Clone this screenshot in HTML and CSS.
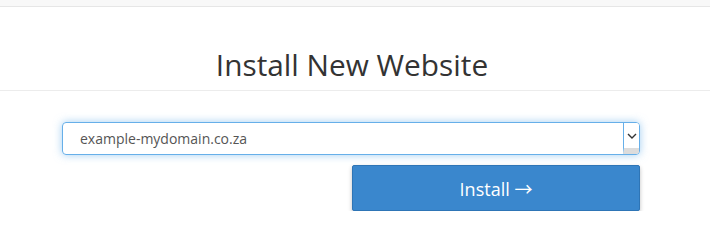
FILE: index.html
```html
<!DOCTYPE html>
<html>
<head>
<meta charset="utf-8">
<link rel="stylesheet" href="styles.css">
</head>
<body>
<div class="topbar"></div>
<div class="header">
  <h1 class="title">Install New Website</h1>
</div>
<div class="form">
  <div class="select">
    <span class="select-text">example-mydomain.co.za</span>
    <span class="select-arrow">
      <svg width="10" height="6" viewBox="0 0 10 6"><path d="M1 1 L5 5 L9 1" fill="none" stroke="#333" stroke-width="1.4"/></svg>
    </span>
  </div>
  <div class="actions">
    <button class="btn">Install <span class="arrow">→</span></button>
  </div>
</div>
</body>
</html>
```
FILE: styles.css
```css
html, body { margin: 0; padding: 0; background: #fff; }
body { font-family: "Open Sans", "DejaVu Sans", sans-serif; }
.topbar { height: 6px; background: #f8f8f8; border-bottom: 1px solid #e6e6e6; }
.header { height: 83px; border-bottom: 1px solid #ececec; display: flex; align-items: flex-end; justify-content: center; padding-right: 6px; }
.title { margin: 0 0 5px 0; font-size: 29.8px; font-weight: 400; color: #333; line-height: 40px; }
.form { padding: 31px 0 0 62px; width: 578px; }
.select { height: 31px; border: 1px solid #66afe9; border-radius: 4px; box-shadow: 0 0 8px rgba(102,175,233,0.6); display: flex; align-items: center; }
.select-text { flex: 1; padding-left: 17px; font-size: 14px; color: #555; }
.select-arrow { align-self: stretch; width: 15px; border-left: 1px solid #66afe9; display: flex; align-items: center; justify-content: center; border-bottom: 6px solid #dcdcdc; border-radius: 0 3px 3px 0; background: #fff; }
.actions { display: flex; justify-content: flex-end; margin-top: 10px; }
.btn { width: 288px; height: 46px; background: #3a87cd; border: 1px solid #2e75b6; border-radius: 2px; color: #fff; font-family: "Open Sans", sans-serif; font-size: 18px; box-shadow: 0 2px 4px rgba(0,0,0,0.25); padding: 0; line-height: 24px; }
.arrow { font-family: "Noto Sans CJK JP", sans-serif; font-size: 18px; }
```
